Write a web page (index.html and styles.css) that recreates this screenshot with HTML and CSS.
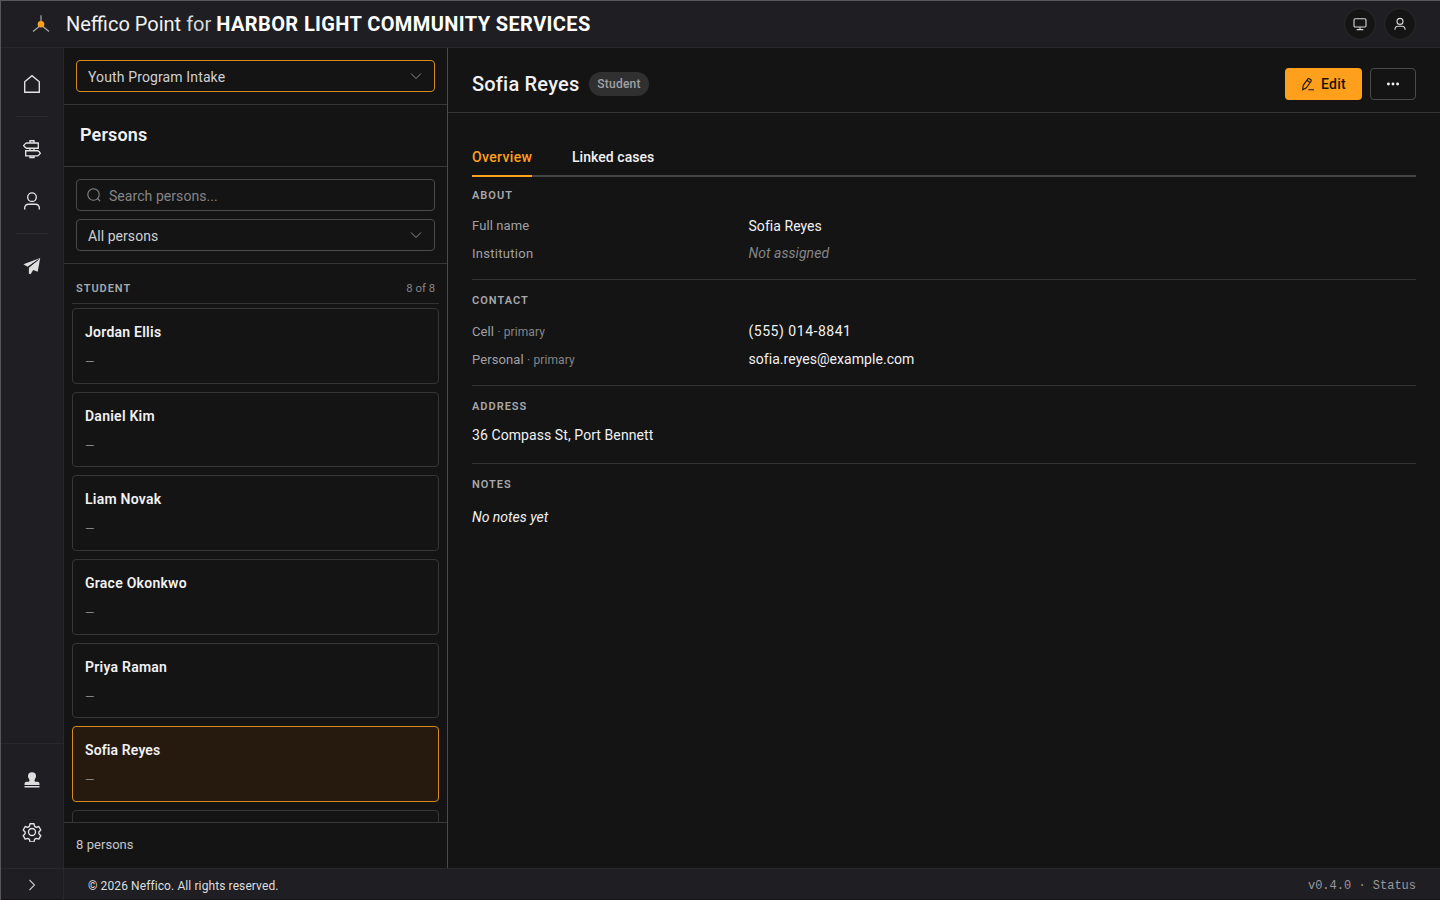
FILE: index.html
```html
<!DOCTYPE html>
<html lang="en">
<head>
<meta charset="utf-8">
<title>Neffico Point</title>
<link rel="stylesheet" href="styles.css">
</head>
<body>
<div class="app">
  <header class="topbar">
    <svg class="logo" width="20" height="20" viewBox="0 0 20 20"><path d="M10 11V1.300M10 11 2 17.500M10 11l8 6.500" stroke="#a9a9ab" stroke-width="1.200" fill="none"/><circle cx="10" cy="10.300" r="3.300" fill="#ff9f1a"/></svg>
    <h1 class="brand"><span class="brand-name">Neffico Point</span> <span class="brand-for">for</span> <strong class="brand-org">HARBOR LIGHT COMMUNITY SERVICES</strong></h1>
    <div class="top-actions">
      <button class="round"><svg width="16" height="16" viewBox="0 0 16 16"><rect x="2" y="2.700" width="12" height="8.300" rx="1.200"/><path d="M8 11v2.500M4.700 13.600h6.600"/></svg></button>
      <button class="round"><svg width="16" height="16" viewBox="0 0 16 16"><circle cx="8" cy="5.400" r="3"/><path d="M3 13.800V13a2.700 2.700 0 0 1 2.700-2.700h4.600A2.700 2.700 0 0 1 13 13v.8"/></svg></button>
    </div>
  </header>
  <div class="body">
    <nav class="rail">
      <a class="nav-item home"><svg width="20" height="20" viewBox="0 0 20 20"><path d="M2.700 18.200V7.700L10 1.700l7.300 6v10.500z"/></svg></a>
      <hr class="sep">
      <a class="nav-item signs"><svg width="20" height="20" viewBox="0 0 20 20"><path d="M8 4V1.700h4V4M8 9.200v2.500M12 9.200v2.500M8 16.800v1.700h4v-1.700M4.300 4h12v5.200h-12Q2.700 8.200 1.700 6.600 2.700 5 4.300 4zM15.700 11.700h-12v5.100h12q1.800-.9 2.600-2.500-.8-1.700-2.600-2.600z"/></svg></a>
      <a class="nav-item person"><svg width="20" height="20" viewBox="0 0 20 20"><circle cx="10" cy="6.200" r="4.300"/><path d="M2.700 18.500v-1.700a3.600 3.600 0 0 1 3.600-3.600h7.400a3.600 3.600 0 0 1 3.600 3.600v1.700"/></svg></a>
      <hr class="sep">
      <a class="nav-item plane"><svg class="solid" width="20" height="20" viewBox="0 0 20 20"><path d="M18.200 2 1.400 8.300l4.200 2.500zM18.200 2l-2.500 13.800-4.500-1.800-2.600 4.200-1.900-.7V12z"/><path d="M16.500 3.600 6.200 11.200v6.300" stroke="#1f1f23" stroke-width=".9" fill="none"/></svg></a>
      <div class="rail-bottom">
        <a class="nav-item"><svg class="solid" width="20" height="20" viewBox="0 0 20 20"><path d="M10 2.200a4 4 0 0 1 4 4c0 1.800-1.500 2.600-1.500 4.300 0 .9.700 1.300 1.500 1.300h1.500a2 2 0 0 1 2 2v1.200h-15v-1.200a2 2 0 0 1 2-2H6c.8 0 1.500-.4 1.500-1.300 0-1.700-1.500-2.500-1.500-4.300a4 4 0 0 1 4-4zM2.500 16.100h15v1.500h-15z"/></svg></a>
        <a class="nav-item"><svg width="20" height="20" viewBox="0 0 20 20"><circle cx="10" cy="10" r="3.500"/><path d="M8 1.700h4l.6 2.600 1.700 1 2.500-.8 2 3.500-1.900 1.900v1.900l1.900 1.900-2 3.400-2.500-.7-1.700 1-.6 2.500H8l-.6-2.500-1.700-1-2.500.7-2-3.400 1.900-1.900V9.900L1.200 8l2-3.500 2.500.8 1.700-1z" stroke-linejoin="round"/></svg></a>
      </div>
    </nav>
    <section class="list-panel">
      <div class="case-box"><div class="field active"><span class="t-case">Youth Program Intake</span><svg class="chev" width="12" height="12" viewBox="0 0 12 12"><path d="m1 3.500 5 5 5-5"/></svg></div></div>
      <h2 class="list-title"><span>Persons</span></h2>
      <div class="filters">
        <div class="field search"><svg width="16" height="16" viewBox="0 0 16 16"><circle cx="7.500" cy="7.500" r="5.700"/><path d="m11.500 11.500 2.700 2.700"/></svg><span class="t-search">Search persons...</span></div>
        <div class="field"><span class="t-all">All persons</span><svg class="chev" width="12" height="12" viewBox="0 0 12 12"><path d="m1 3.500 5 5 5-5"/></svg></div>
      </div>
      <div class="list">
        <div class="group"><span class="group-name">STUDENT</span><span class="group-count">8 of 8</span></div>
        <article class="card"><b>Jordan Ellis</b><i>—</i></article>
        <article class="card"><b>Daniel Kim</b><i>—</i></article>
        <article class="card"><b>Liam Novak</b><i>—</i></article>
        <article class="card"><b>Grace Okonkwo</b><i>—</i></article>
        <article class="card"><b>Priya Raman</b><i>—</i></article>
        <article class="card selected"><b>Sofia Reyes</b><i>—</i></article>
        <article class="card"></article>
      </div>
      <div class="list-foot"><span>8 persons</span></div>
    </section>
    <main class="detail">
      <div class="detail-head">
        <h2 class="person-name">Sofia Reyes</h2><span class="badge">Student</span>
        <button class="btn primary"><svg width="14" height="14" viewBox="0 0 14 14"><path d="m2.200 8.400 4.700-6.500q.6-.8 1.400-.2l1.600 1.100q.8.600.2 1.400L5.400 10.800l-3.700 2zM5.900 3.300l3 2.200M7.300 12.800h5.700"/></svg><span>Edit</span></button>
        <button class="btn more"><svg width="14" height="14" viewBox="0 0 14 14"><circle cx="2.400" cy="7" r="1.450"/><circle cx="7" cy="7" r="1.450"/><circle cx="11.600" cy="7" r="1.450"/></svg></button>
      </div>
      <div class="content">
        <div class="tabs"><a class="tab on">Overview</a><a class="tab linked">Linked cases</a></div>
        <section class="block about">
          <h3>ABOUT</h3>
          <div class="row"><span class="key">Full name</span><span class="val">Sofia Reyes</span></div>
          <div class="row"><span class="key inst">Institution</span><em class="val none">Not assigned</em></div>
        </section>
        <section class="block contact">
          <h3>CONTACT</h3>
          <div class="row"><span class="key">Cell <small>· primary</small></span><span class="val phone">(555) 014-8841</span></div>
          <div class="row"><span class="key">Personal <small>· primary</small></span><span class="val mail">sofia.reyes@example.com</span></div>
        </section>
        <section class="block address">
          <h3>ADDRESS</h3>
          <p>36 Compass St, Port Bennett</p>
        </section>
        <section class="block notes">
          <h3>NOTES</h3>
          <p><em>No notes yet</em></p>
        </section>
      </div>
    </main>
  </div>
  <footer class="footer">
    <div class="expand"><svg width="12" height="12" viewBox="0 0 12 12"><path d="m3.500 1 5 5-5 5"/></svg></div>
    <span class="copy">© 2026 Neffico. All rights reserved.</span>
    <span class="version">v0.4.0 · Status</span>
  </footer>
</div>
</body>
</html>
```

FILE: styles.css
```css
* { box-sizing: border-box; }
body { margin: 0; background: #141414; color: #f1f1f3; font: 14px/20px Roboto, sans-serif; }
h1, h2, h3, p { margin: 0; }
button { font: inherit; padding: 0; }
svg { display: block; flex: none; fill: none; stroke: currentColor; stroke-width: 1.1; }
.app { width: 1440px; height: 900px; display: flex; flex-direction: column; overflow: hidden; border-top: 1px solid #57575b; border-left: 1px solid #57575b; white-space: nowrap; }
.topbar { height: 47px; flex: none; background: #1f1f23; border-bottom: 1px solid #29292c; display: flex; align-items: center; padding: 0 24px 0 30px; }
.logo { stroke: none; }
.brand { font-size: 20px; line-height: 28px; font-weight: 400; margin-left: 15px; display: flex; gap: 5px; }
.brand-for { color: #d8d8da; }
.brand-org { font-weight: 700; color: #fff; letter-spacing: .39px; }
.top-actions { margin-left: auto; display: flex; gap: 8px; }
.round { width: 32px; height: 32px; border-radius: 50%; background: #141414; border: 1px solid #2a2a2c; color: #d6d6d8; display: grid; place-items: center; }
.body { flex: 1; min-height: 0; display: flex; }
.rail { width: 63px; background: #1f1f23; border-right: 1px solid #29292c; display: flex; flex-direction: column; align-items: center; color: #e4e4e5; padding-top: 10px; }
.rail svg { stroke-width: 1.35; }
.nav-item { height: 52px; width: 62px; display: grid; place-items: center; flex: none; }
.sep { width: 32px; height: 1px; border: 0; margin: 6px 0; background: #2b2b2e; flex: none; }
.rail .solid { fill: #dededf; stroke: none; }
.rail-bottom { margin-top: auto; width: 62px; border-top: 1px solid #29292c; padding: 10px 0; }
.list-panel { width: 384px; border-right: 1px solid #4a4a4a; display: flex; flex-direction: column; }
.case-box { padding: 12px; border-bottom: 1px solid #363636; height: 57px; }
.field { height: 32px; border: 1px solid #4a4a4a; border-radius: 4px; display: flex; align-items: center; padding: 0 12px 0 11px; }
.field span { padding-top: 1px; letter-spacing: .06px; }
.field .t-case { letter-spacing: .13px; }
.field.active { border-color: #d98a1c; }
.field.active, .t-all { color: #cfd0d4; }
.chev { margin-left: auto; color: #8b8b8d; stroke-width: 1; }
.list-title { height: 62px; padding: 0 16px 2px; font-size: 18px; font-weight: 600; letter-spacing: .14px; display: flex; align-items: center; border-bottom: 1px solid #363636; }
.filters { height: 97px; padding: 12px; border-bottom: 1px solid #363636; display: flex; flex-direction: column; gap: 8px; }
.search { color: #858588; gap: 7px; padding-left: 9px; }
.list { flex: 1; min-height: 0; overflow: hidden; padding: 8px 8px 0; display: flex; flex-direction: column; }
.group { height: 32px; flex: none; border-bottom: 1px solid #333; display: flex; align-items: center; justify-content: space-between; padding: 3px 4px 0; margin-bottom: 4.300px; font-size: 11.300px; color: #858588; }
.group-name { font-size: 11px; font-weight: 600; color: #a6a8ae; letter-spacing: .95px; }
.card { height: 75.600px; flex: none; border: 1px solid #363636; border-radius: 4px; margin-bottom: 8px; padding: 13px 12px 0; display: flex; flex-direction: column; gap: 10px; }
.card b { font-weight: 600; letter-spacing: .25px; }
.card i { font: 12px/20px Roboto, sans-serif; color: #858588; }
.card.selected { background: #261a0e; border-color: #d98a1c; }
.card.selected b { letter-spacing: .12px; }
.list-foot { height: 46px; border-top: 1px solid #363636; padding: 0 12px 2px; display: flex; align-items: center; font-size: 13px; letter-spacing: .05px; color: #c4c5c9; }
.detail { flex: 1; }
.detail-head { height: 65px; padding: 7px 24px 0; display: flex; align-items: center; border-bottom: 1px solid #363636; }
.person-name { font-size: 20px; font-weight: 500; letter-spacing: .2px; width: 107px; }
.badge { margin-left: 10px; width: 60px; height: 24px; border-radius: 12px; background: #303030; color: #a0a1a5; font-size: 12px; font-weight: 500; letter-spacing: .25px; display: grid; place-items: center; }
.btn { height: 32px; border-radius: 4px; display: flex; align-items: center; justify-content: center; }
.primary { margin-left: auto; width: 77px; gap: 6px; background: #ffa01c; color: #1b1306; border: 0; font-weight: 500; letter-spacing: .3px; }
.more { margin-left: 8px; width: 46px; border: 1px solid #4a4a4a; background: none; color: #f1f1f3; }
.more svg { fill: currentColor; stroke: none; }
.content { padding: 24px 24px 0; }
.tabs { height: 40px; display: flex; gap: 40px; border-bottom: 2px solid #444; font-weight: 500; line-height: 40px; }
.tab { height: 40px; }
.tab.on { color: #ffa01c; border-bottom: 2px solid #ffa01c; width: 60px; letter-spacing: .35px; }
.linked { letter-spacing: .05px; }
h3 { font-size: 11px; line-height: 16px; font-weight: 600; color: #a6a8ae; letter-spacing: 1px; margin-bottom: 8px; }
.block { border-bottom: 1px solid #333; padding-top: 13px; height: 106px; }
.about { height: 103px; padding-top: 11px; }
.about .row { height: 27.500px; }
.address { height: 78px; }
.address p { padding-top: 2px; letter-spacing: .08px; }
.notes { border: 0; }
.notes p { margin-top: 14px; }
.row { display: flex; height: 28px; align-items: center; }
.val { padding-left: .5px; letter-spacing: .05px; }
.phone { letter-spacing: .52px; }
.key { width: 276px; font-size: 13px; letter-spacing: .1px; padding-top: 1px; color: #a0a1a5; }
.inst { letter-spacing: .28px; }
.key small { font-size: 12px; color: #858588; }
.none { color: #858588; }
.footer { height: 32px; flex: none; background: #1f1f23; border-top: 1px solid #29292c; border-bottom: 1px solid #141018; display: flex; align-items: center; padding-right: 24px; font-size: 12px; }
.expand { width: 63px; height: 31px; padding-top: 2px; border-right: 1px solid #29292c; display: grid; place-items: center; color: #c4c5c9; }
.copy { margin-left: 24px; padding-top: 3px; letter-spacing: .1px; color: #dededf; }
.version { margin-left: auto; padding-top: 3px; font-family: "Liberation Mono", monospace; color: #98989b; }
```
